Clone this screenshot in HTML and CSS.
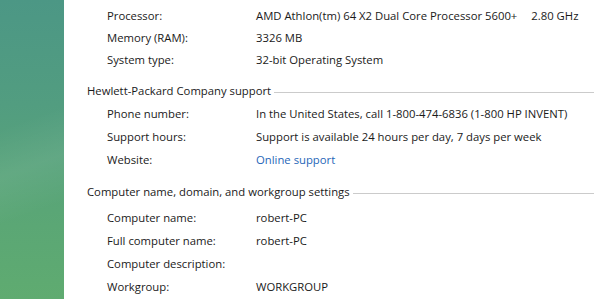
FILE: index.html
```html
<!DOCTYPE html>
<html>
<head>
<meta charset="utf-8">
<link rel="stylesheet" href="styles.css">
</head>
<body>
<div class="window">
  <div class="sidebar"></div>
  <div class="content">
    <div class="section s1">
      <div class="row"><span class="label">Processor:</span><span class="value">AMD Athlon(tm) 64 X2 Dual Core Processor 5600+<span class="speed">2.80 GHz</span></span></div>
      <div class="row"><span class="label">Memory (RAM):</span><span class="value">3326 MB</span></div>
      <div class="row"><span class="label">System type:</span><span class="value">32-bit Operating System</span></div>
    </div>
    <div class="heading h1"><span class="htext">Hewlett-Packard Company support</span><span class="rule"></span></div>
    <div class="section s2">
      <div class="row"><span class="label">Phone number:</span><span class="value">In the United States, call 1-800-474-6836 (1-800 HP INVENT)</span></div>
      <div class="row"><span class="label">Support hours:</span><span class="value">Support is available 24 hours per day, 7 days per week</span></div>
      <div class="row"><span class="label">Website:</span><span class="value"><a class="link" href="#">Online support</a></span></div>
    </div>
    <div class="heading h2"><span class="htext">Computer name, domain, and workgroup settings</span><span class="rule"></span></div>
    <div class="section s3">
      <div class="row"><span class="label">Computer name:</span><span class="value">robert-PC</span></div>
      <div class="row"><span class="label">Full computer name:</span><span class="value">robert-PC</span></div>
      <div class="row"><span class="label">Computer description:</span><span class="value"></span></div>
      <div class="row"><span class="label">Workgroup:</span><span class="value">WORKGROUP</span></div>
    </div>
  </div>
</div>
</body>
</html>
```
FILE: styles.css
```css
html, body {
  margin: 0;
  padding: 0;
  background: #ffffff;
}
.window {
  display: flex;
  width: 595px;
  height: 299px;
  overflow: hidden;
  font-family: "Open Sans", "Noto Sans", sans-serif;
  font-size: 11.3px;
  color: #1a1a1a;
}
.sidebar {
  width: 64px;
  flex: none;
  background:
    linear-gradient(160deg, rgba(255,255,255,0) 40%, rgba(255,255,255,0.07) 55%, rgba(255,255,255,0) 70%),
    linear-gradient(180deg, #4c9785 0%, #529d80 35%, #5aa676 70%, #5fab70 100%);
}
.content {
  flex: 1;
  padding: 5px 1px 0 23px;
}
.row {
  display: grid;
  grid-template-columns: 149px 1fr;
  padding-left: 20px;
  height: 22px;
  line-height: 22px;
  white-space: nowrap;
}
.s2 .row, .s3 .row {
  height: 23px;
  line-height: 23px;
}
.speed {
  margin-left: 14px;
}
.heading {
  display: flex;
  align-items: center;
  height: 22px;
  line-height: 22px;
  white-space: nowrap;
}
.h1 { margin-top: 9px; }
.h2 { margin-top: 10px; }
.s3 { margin-top: 3px; }
.rule {
  flex: 1;
  height: 1px;
  background: #cbcbcb;
  margin-left: 3px;
  margin-top: 2px;
}
.link {
  color: #1f66b8;
  text-decoration: none;
}
```
